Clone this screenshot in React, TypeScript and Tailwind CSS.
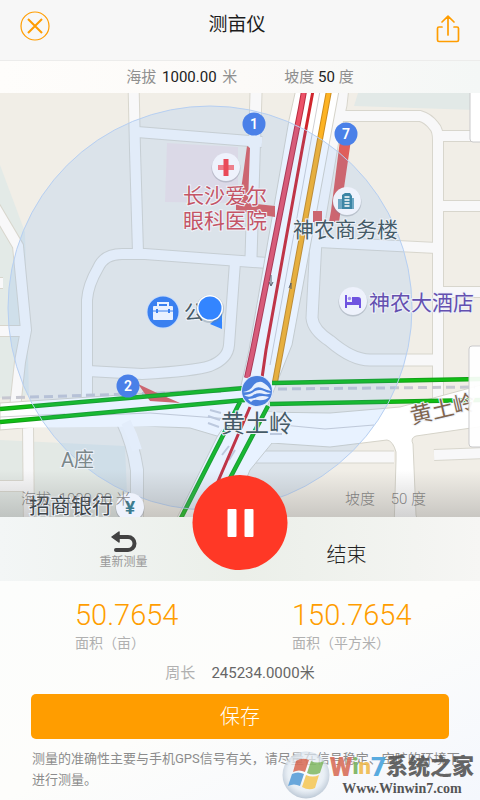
import React from "react";

const sans = "font-['Roboto','Noto_Sans_CJK_SC',sans-serif]";

// side streets of the map: path + width
const streets = [
  { d: "M133 60L135 150L138 253", w: 10 },
  { d: "M137 132L262 142", w: 10 },
  { d: "M257 60L251 258", w: 11 },
  { d: "M87 402V300Q88 285 98 268Q104 254 122 254L145 254L268 263", w: 10 },
  { d: "M235 262L229 345Q228 359 210 366Q195 371 142 374L88 371", w: 10 },
  { d: "M-5 207L18 246L26 330L20 362L15 408", w: 10 },
  { d: "M-5 331H24", w: 10 },
  { d: "M-5 283H3", w: 10 },
  { d: "M346 60L341 105L333 140L316 240L312 318Q313 330 330 341Q352 360 370 360H436", w: 11 },
  { d: "M318 242L437 248", w: 10 },
  { d: "M342 116H420Q428 118 434 126Q438 130 438 140V398", w: 10 },
  { d: "M440 136H485", w: 10 },
  { d: "M438 206H485", w: 10 },
  { d: "M438 292H485", w: 10 },
  { d: "M28 426L29 530", w: 10 },
  { d: "M-5 486H32", w: 10 },
  { d: "M122 420Q133 443 137 470V530", w: 12 },
  { d: "M242 457H394", w: 11 },
  { d: "M434 455L485 453", w: 10 },
];

const Pin = ({ x, y, label }: { x: number; y: number; label: string }) => (
  <g>
    <circle cx={x} cy={y} r="11.5" fill="#4a80e8" />
    <text x={x} y={y + 5} fontSize="14" fontWeight="600" fill="#fff" textAnchor="middle">
      {label}
    </text>
  </g>
);

const MapLabel = ({ x, y, color, size = 21, children }: any) => (
  <text
    x={x}
    y={y}
    fontSize={size}
    fontWeight="400"
    fill={color}
    stroke="#eef2f9"
    strokeWidth="2"
    paintOrder="stroke"
  >
    {children}
  </text>
);

const Badge = ({ x, y }: { x: number; y: number }) => (
  <g>
    <circle cx={x} cy={y + 1} r="14.5" fill="#7a8595" opacity="0.35" />
    <circle cx={x} cy={y} r="14" fill="#eef2fc" />
  </g>
);

const MapView = () => (
  <svg
    className="block h-[424px] w-full"
    viewBox="0 93 480 424"
    preserveAspectRatio="xMidYMid slice"
    role="img"
    aria-label="地图"
  >
    <defs>
      <linearGradient id="shade" x1="0" y1="0" x2="0" y2="1">
        <stop offset="0" stopColor="#777" stopOpacity="0" />
        <stop offset="1" stopColor="#777" stopOpacity="0.35" />
      </linearGradient>
    </defs>
    <rect y="60" width="480" height="470" fill="#f1eee7" />
    {/* parks and blocks */}
    <path d="M0 165L25 232L29 395L0 398Z" fill="#e3eae7" />
    <path d="M0 440L125 446L128 517H0Z" fill="#e3e9e5" />
    <path d="M358 93L354 106L475 110V93Z" fill="#e2e9e7" />
    <path d="M167 143L238 147V203L165 202Z" fill="#f1e3e4" />

    {streets.map((s) => (
      <path key={s.d} d={s.d} fill="none" stroke="#d8d6cd" strokeWidth={s.w + 2} />
    ))}
    {streets.map((s) => (
      <path key={s.d} d={s.d} fill="none" stroke="#f8f8f9" strokeWidth={s.w} />
    ))}

    {/* main avenues */}
    <g fill="#fff" stroke="#d5d3c9">
      <path d="M0 403L180 391L258 385V443L217 436L190 428L120 425L35 427L0 430Z" />
      <path d="M258 412L330 413L400 407L485 384V426L416 436Q410 438 413 444L416 515L420 530H394L396 460V452Q393 441 387 440L330 447L271 443L250 460Z" />
      <path d="M298 80H341L292 345L266 410L272 443L250 470L225 530H171L217 437L236 408L249 350L289 120Z" />
    </g>
    <path d="M2 404L170 393L258 387V434L190 426L2 428Z" fill="#fff" />
    <path d="M237 412H269L330 415V443H250L230 440Z" fill="#fff" />
    <path d="M126 422Q133 436 137 450" fill="none" stroke="#fafafb" strokeWidth="10" />
    <g fill="none" stroke="#d0d0d4">
      <path d="M0 417L65 414M75 416L150 413L230 419M272 424L325 429L374 425" />
      <path d="M322 80L302 190L270 365M331 80L275 370" />
    </g>
    <path d="M2 398L225 391M278 389L475 387" stroke="#c6c7d1" strokeWidth="3" strokeDasharray="9 5" />
    <path d="M210 410L221 413M208 416L220 420M208 423L219 427M222 441L217 450M229 446L222 455M235 450L229 460M270 434H282" stroke="#cdd0da" strokeWidth="2" />

    {/* passages to the station exits */}
    <g fill="#df5f5b">
      <path d="M247 146L250 148L248 203L275 206V217L250 213L236 210V205L241 190Z" />
      <path d="M340 140H351L339 222H329L331 211ZM313 211H322V222H313Z" />
      <path d="M138 384L155 392L180 403L150 401Z" />
    </g>

    <g fill="none">
      <path d="M306 80L301 108L253 350L247 378" stroke="#b92d40" strokeWidth="6" />
      <path d="M306 80L301 108L253 350L247 378" stroke="#ec5267" strokeWidth="4" />
      <path d="M315 80L302 150L266 350L262 378M250 407L216 486" stroke="#d0262d" strokeWidth="3" />
      <path d="M331 80L318 150L281 350L275 382" stroke="#ce8c1c" strokeWidth="6" />
      <path d="M331 80L318 150L281 350L275 382" stroke="#fdb323" strokeWidth="4" />
      <path d="M0 409L245 388M272 383L480 379M0 422L245 400M270 404L480 400M240 402L180 520M268 406L228 482" stroke="#12a018" strokeWidth="4.5" />
      <path d="M0 409L245 388M272 383L480 379M0 422L245 400M270 404L480 400M240 402L180 520M268 406L228 482" stroke="#11be14" strokeWidth="2.5" />
    </g>
    <path d="M271 275V285M269 282L271 286L273 282M289 288L291 283V289" fill="none" stroke="#555" />

    <circle cx="210" cy="308" r="202" fill="#5099ff" fillOpacity="0.13" stroke="#b6cff2" />

    <Pin x={254} y={124} label="1" />
    <Pin x={346} y={134} label="7" />
    <Pin x={128} y={386} label="2" />

    {/* hospital */}
    <Badge x={226} y={167} />
    <path d="M218 167.5H234" stroke="#ed7f8c" strokeWidth="5" />
    <path d="M226 159V176" stroke="#e94a59" strokeWidth="5" />
    <MapLabel x={183} y={203} color="#c45566">长沙爱尔</MapLabel>
    <MapLabel x={183} y={228} color="#c45566">眼科医院</MapLabel>

    {/* office tower */}
    <Badge x={347} y={201} />
    <path d="M338 199H343V209H338ZM350 198H354V209H350Z" fill="#6fa8c4" />
    <path d="M342 209V195L345 193H350L352 196V209Z" fill="#3c85a5" />
    <path d="M344.5 197H349.5M344.5 200H349.5M344.5 203H349.5M344.5 206H349.5" stroke="#fff" strokeWidth="1.5" />
    <MapLabel x={293} y={237} color="#455b67">神农商务楼</MapLabel>

    {/* hotel */}
    <Badge x={353} y={301} />
    <path d="M345 295V308H347V305H359V308H361V300Q361 297 358 297H352V302H347V295Z" fill="#6f54e0" />
    <circle cx="349.5" cy="298.5" r="1.7" fill="#a392ee" />
    <MapLabel x={369} y={310} color="#6450b0">神农大酒店</MapLabel>

    {/* company */}
    <circle cx="163" cy="312" r="16.5" fill="#c8dcfa" />
    <circle cx="163" cy="312" r="15.5" fill="#3a80f0" />
    <path d="M158 307V303H168V307" fill="none" stroke="#e9f1ff" strokeWidth="2" />
    <rect x="153" y="306" width="20" height="14" rx="1" fill="#e9f1ff" />
    <path d="M153 311H173" stroke="#3a80f0" />
    <path d="M157 309V313M169 309V313" stroke="#3a80f0" strokeWidth="2" />
    <MapLabel x={184} y={320} color="#455b67" size={20}>公司</MapLabel>

    {/* own position */}
    <path d="M210 324L222 329V313Z" fill="#3385ff" />
    <circle cx="210" cy="309" r="14" fill="#6b7d93" opacity="0.35" />
    <circle cx="210" cy="308" r="13" fill="#fff" />
    <circle cx="210" cy="308" r="11.5" fill="#3385ff" />

    {/* metro station */}
    <circle cx="257" cy="391" r="16" fill="#dfeafd" />
    <circle cx="257" cy="391" r="15" fill="#4a80dd" />
    <path d="M243 392Q250 391 253 386Q256 381 262 382Q268 385 271 391Q266 390 262 388Q257 386 254 389Q250 393 243 392Z" fill="#e6effd" />
    <path d="M244 395Q250 395 255 391Q260 389 264 391Q267 393 271 393Q268 395 264 394Q257 392 252 396Q248 398 244 395Z" fill="#e6effd" />
    <path d="M248 399Q254 399 257 397Q262 395 269 397Q265 401 258 400Q253 399 251 402Z" fill="#e6effd" />
    <MapLabel x={221} y={432} color="#455b67" size={24}>黄土岭</MapLabel>
    <g transform="rotate(-13 412 423)">
      <MapLabel x={412} y={424} color="#80654f" size={22}>黄土岭</MapLabel>
    </g>
    <MapLabel x={61} y={467} color="#7b8789" size={20}>A座</MapLabel>

    <rect y="470" width="480" height="50" fill="url(#shade)" />
    <Badge x={130} y={507} />
    <text x="130" y="514" fontSize="19" fontWeight="700" fill="#3c7c90" textAnchor="middle">¥</text>
    <MapLabel x={29} y={513} color="#3f474b">招商银行</MapLabel>

    {/* edges of the tool drawers */}
    <rect x="470" y="60" width="20" height="82" rx="3" fill="#fff" stroke="#c9c9cb" />
    <rect x="469" y="346" width="20" height="101" rx="3" fill="#fff" fillOpacity="0.93" stroke="#c9c9cb" />
  </svg>
);

const WinLogo = () => (
  <svg className="h-12 w-12 shrink-0" viewBox="0 0 48 48" aria-hidden="true">
    <defs>
      <radialGradient id="orb" cx="0.5" cy="0.45" r="0.55">
        <stop offset="0" stopColor="#fff" stopOpacity="0.8" />
        <stop offset="0.7" stopColor="#e3ebf3" stopOpacity="0.8" />
        <stop offset="1" stopColor="#b7c4d2" />
      </radialGradient>
    </defs>
    <circle cx="24" cy="24" r="23.5" fill="url(#orb)" />
    <path d="M14 10Q20 6 27 9L23 21Q17 18 11 21Z" fill="#d9705b" />
    <path d="M29 10Q35 13 42 10L38 22Q31 25 25 22Z" fill="#86bb6a" />
    <path d="M10 23Q16 20 22 23L18 35Q12 32 6 35Z" fill="#5a9fd8" />
    <path d="M24 24Q31 27 37 24L33 37Q27 40 20 36Z" fill="#f5c95c" />
  </svg>
);

const App = () => {
  return (
    <div className={`${sans} flex min-h-screen flex-col bg-[#fcfcfb] text-[#222]`}>
      <header className="flex h-[61px] items-start justify-between border-b border-[#ececeb] bg-[#f7f7f7] px-5 pt-[11px]">
        <button type="button" aria-label="关闭" className="text-[#ff9d00]">
          <svg className="h-[30px] w-[30px]" viewBox="0 0 30 30" fill="none" stroke="currentColor">
            <circle cx="15" cy="15" r="14" strokeWidth="1.2" />
            <path d="M8 8L22 22M22 8L8 22" strokeWidth="2" />
          </svg>
        </button>
        <h1 className="text-[19px] leading-[27px] text-[#1c1c1c]">测亩仪</h1>
        <button type="button" aria-label="分享" className="flex w-9 justify-end pt-1 text-[#ff9d00]">
          <svg
            className="h-[28px] w-6"
            viewBox="0 0 24 28"
            fill="none"
            stroke="currentColor"
            strokeWidth="1.7"
            strokeLinecap="round"
            strokeLinejoin="round"
          >
            <path d="M12 20V1.5M6 7L12 1.2L18 7M6 12H3Q1.500 12 1.500 13.500V25Q1.500 26.500 3 26.500H21Q22.500 26.500 22.500 25V13.500Q22.500 12 21 12H18" />
          </svg>
        </button>
      </header>

      <div className="flex h-8 items-center justify-center gap-[47px] bg-gradient-to-r from-[#fefdfb] via-[#fcfaf8] to-[#f4f7f6] text-[15px] leading-7 text-[#8f8f8f]">
        <p>
          海拔 <span className="mx-0.5 text-[#222]">1000.00</span> 米
        </p>
        <p>
          坡度 <span className="text-[#222]">50</span> 度
        </p>
      </div>

      <main className="relative">
        <MapView />
        <div className="absolute inset-x-0 bottom-0 flex justify-between pr-[54px] pb-1 pl-[21px] text-[15px] leading-7 font-light text-[#666]/80">
          <p>
            海拔 <span className="ml-1">1000.00</span> 米
          </p>
          <p>
            坡度 <span className="ml-3">50</span> 度
          </p>
        </div>
      </main>

      <section className="relative flex h-16 bg-gradient-to-r from-[#f3f6f6] via-[#ebefe9] to-[#f6f6f4]">
        <button
          type="button"
          className="flex flex-1 flex-col items-center pt-[13px] pl-3 text-xs leading-4 text-[#999]"
        >
          <svg className="h-6 w-7" viewBox="0 0 28 24" fill="none" stroke="#424242" strokeWidth="4" strokeLinecap="round">
            <path d="M9 7H18A6.500 6.500 0 0 1 18 20H6" />
            <path d="M2 7L9 2V12Z" fill="#424242" strokeWidth="1.5" strokeLinejoin="round" />
          </svg>
          重新测量
        </button>
        <button type="button" className="flex-1 pt-3 pr-[22px] text-[20px] font-light text-[#222]">
          结束
        </button>
        <button
          type="button"
          aria-label="暂停"
          className="absolute -top-[42px] left-1/2 flex h-[95px] w-[95px] -translate-x-1/2 items-center justify-center gap-2 rounded-full bg-[#ff3826]"
        >
          <span className="h-7 w-[9px] rounded-[1px] bg-white" />
          <span className="h-7 w-[9px] rounded-[1px] bg-white" />
        </button>
      </section>

      <section className="flex-1 bg-gradient-to-br from-[#fcfdfc] via-[#fdfdfb] to-[#f4f7fd]">
        <div className="grid grid-cols-[217fr_188fr] pt-4 pl-[75px]">
          <div>
            <p className="text-[29px] leading-9 font-light text-[#ff9d00]">50.7654</p>
            <p className="text-sm leading-5 text-[#b0b0b0]">面积（亩）</p>
          </div>
          <div>
            <p className="text-[29px] leading-9 font-light text-[#ff9d00]">150.7654</p>
            <p className="text-sm leading-5 text-[#b0b0b0]">面积（平方米）</p>
          </div>
        </div>
        <p className="flex justify-center gap-4 pt-2 text-[15px] leading-6 text-[#666]">
          <span className="text-[#b0b0b0]">周长</span>
          <span>245234.0000米</span>
        </p>
        <div className="px-[31px] pt-[9px]">
          <button type="button" className="h-[45px] w-full rounded-[5px] bg-[#ff9d00] text-[20px] font-light text-white">
            保存
          </button>
        </div>
        <div className="relative">
          <p className="pt-[9px] pr-3 pl-8 text-[13px] leading-[21px] text-[#8c8c8c]">
            测量的准确性主要与手机GPS信号有关，请尽量在信号稳定、空旷的环境下进行测量。
          </p>
          <a href="#" className="absolute top-3 right-1.5 flex items-center opacity-90">
            <WinLogo />
            <span className="flex flex-col items-center">
              <span className="flex items-center text-[22px] leading-7 font-black text-[#555]">
                <span className="text-[26px] text-[#d9705b]">W</span>
                <span className="text-[#79b35f]">i</span>
                <span className="text-[#f0bb4e]">n</span>
                <span className="text-[26px] text-[#48a3dc]">7</span>
                系统之家
              </span>
              <span className="font-['Liberation_Serif',serif] text-[14px] leading-4 font-bold text-[#444]">
                Www.Winwin7.com
              </span>
            </span>
          </a>
        </div>
      </section>
    </div>
  );
};

export default App;
